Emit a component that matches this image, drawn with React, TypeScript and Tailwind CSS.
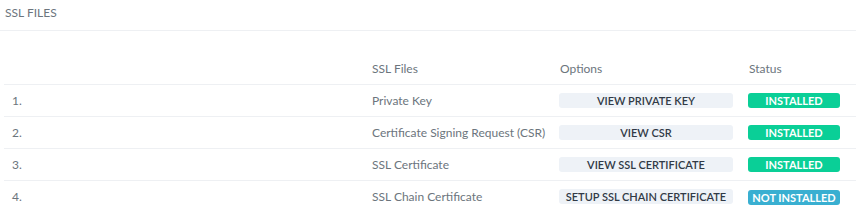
import React from 'react';

const rows = [
  { n: '1.', name: 'Private Key', action: 'VIEW PRIVATE KEY', installed: true },
  { n: '2.', name: 'Certificate Signing Request (CSR)', action: 'VIEW CSR', installed: true },
  { n: '3.', name: 'SSL Certificate', action: 'VIEW SSL CERTIFICATE', installed: true },
  { n: '4.', name: 'SSL Chain Certificate', action: 'SETUP SSL CHAIN CERTIFICATE', installed: false },
];

const cols = 'grid grid-cols-[360px_188px_189px_107px]';

export default function App() {
  return (
    <div className="w-[856px] h-[214px] bg-white text-[#6c757d] text-[12px] font-['Lato','Open_Sans',sans-serif] overflow-hidden whitespace-nowrap">
      <div className="h-[31px] border-b border-[#eef0f3] px-[5px] pt-[5px] leading-[16px] uppercase">
        SSL Files
      </div>
      <div className="pt-[22px] pl-[4px]">
        <div className={`${cols} h-[32px] items-center border-b border-[#eef0f3]`}>
          <div className="px-2" />
          <div className="px-2">SSL Files</div>
          <div className="px-2">Options</div>
          <div className="px-2">Status</div>
        </div>
        {rows.map((r, i) => (
          <div
            key={r.n}
            className={`${cols} h-[32px] items-center ${i < rows.length - 1 ? 'border-b border-[#eef0f3]' : ''}`}
          >
            <div className="px-2">{r.n}</div>
            <div className="px-2">{r.name}</div>
            <div className="pl-[7px]">
              <button className="w-[174px] h-[15px] rounded-[3px] bg-[#eef2f7] text-[#313a46] text-[11px] leading-[15px] font-semibold">
                {r.action}
              </button>
            </div>
            <div className="pl-[7px]">
              <span
                className={`block w-[92px] h-[15px] rounded-[3px] text-white text-[11px] leading-[15px] font-bold text-center ${
                  r.installed ? 'bg-[#0acf97]' : 'bg-[#39afd1]'
                }`}
              >
                {r.installed ? 'INSTALLED' : 'NOT INSTALLED'}
              </span>
            </div>
          </div>
        ))}
      </div>
    </div>
  );
}
